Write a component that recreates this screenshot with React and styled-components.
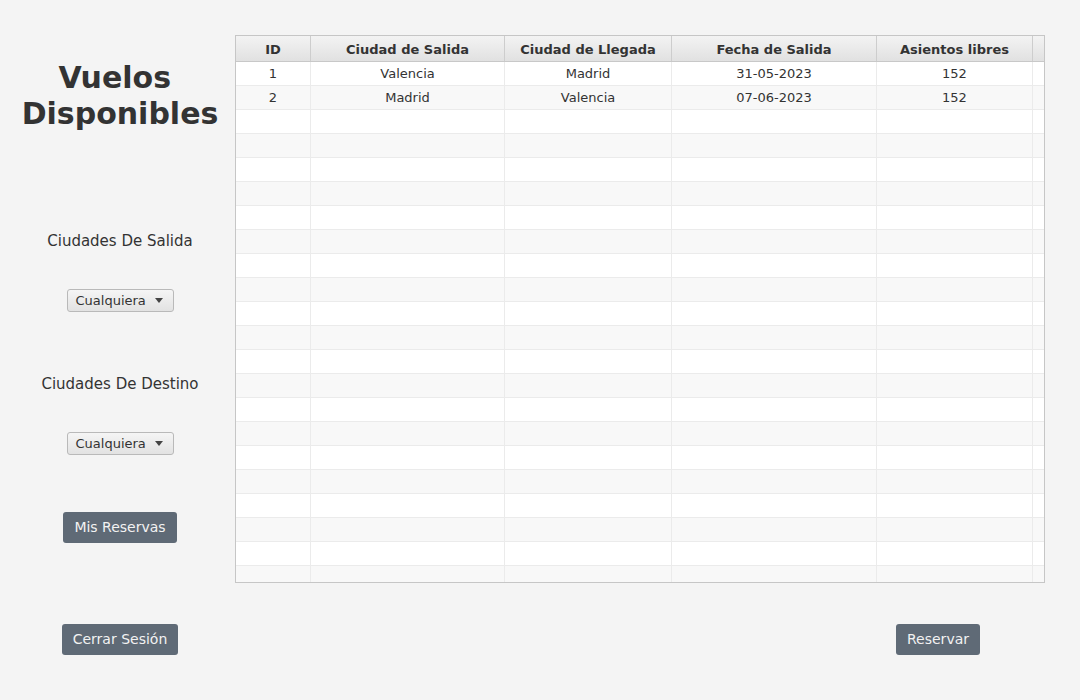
import React from "react";
import styled, { createGlobalStyle } from "styled-components";

const Global = createGlobalStyle`
  html, body { margin: 0; padding: 0; background: #f4f4f4; }
  body { font-family: "DejaVu Sans", "Liberation Sans", sans-serif; color: #333; }
  * { box-sizing: border-box; }
`;

const Page = styled.div`
  display: flex;
  width: 1080px;
  height: 700px;
  background: #f4f4f4;
  overflow: hidden;
`;

const Side = styled.div`
  width: 235px;
  padding-left: 5px;
  display: flex;
  flex-direction: column;
  align-items: center;
  flex-shrink: 0;
`;

const Title = styled.h1`
  margin: 60px 0 0;
  font-size: 30px;
  line-height: 36px;
  font-weight: bold;
  text-align: center;
  color: #333;
  white-space: nowrap;
`;

const Label = styled.div`
  margin-top: ${(p) => p.$top}px;
  font-size: 15px;
  line-height: 17.5px;
  color: #333;
  white-space: nowrap;
`;

const Combo = styled.div`
  margin-top: ${(p) => p.$top}px;
  width: 107px;
  height: 23px;
  display: flex;
  align-items: center;
  justify-content: space-between;
  padding: 0 10px 0 8px;
  border: 1px solid #b9b9b9;
  border-radius: 3px;
  background: linear-gradient(#f5f5f5, #e2e2e2);
  font-size: 13px;
  color: #333;
`;

const Arrow = styled.span`
  width: 0;
  height: 0;
  border-left: 4px solid transparent;
  border-right: 4px solid transparent;
  border-top: 5px solid #444;
`;

const Button = styled.button`
  margin-top: ${(p) => p.$top || 0}px;
  height: 31px;
  padding: 0 11px 2px;
  border: none;
  border-radius: 3px;
  background: #5f6a76;
  color: #f2f2f2;
  font-family: "DejaVu Sans", sans-serif;
  font-size: 14px;
  cursor: pointer;
  white-space: nowrap;
`;

const Main = styled.div`
  display: flex;
  flex-direction: column;
  width: 810px;
`;

const Table = styled.div`
  margin-top: 35px;
  width: 810px;
  height: 548px;
  border: 1px solid #c6c6c6;
  background: #fff;
  overflow: hidden;
`;

const cols = "75px 194px 167px 205px 156px 1fr";

const HeaderRow = styled.div`
  display: grid;
  grid-template-columns: ${cols};
  height: 26px;
  border-bottom: 1px solid #c8c8c8;
  background: linear-gradient(#f3f3f3, #e1e1e1);
`;

const HeadCell = styled.div`
  display: flex;
  align-items: center;
  justify-content: center;
  padding-top: 2px;
  border-right: 1px solid #cdcdcd;
  font-size: 13px;
  font-weight: bold;
  color: #333;
  &:last-child { border-right: none; }
`;

const Row = styled.div`
  display: grid;
  grid-template-columns: ${cols};
  height: 24px;
  border-bottom: 1px solid #ebebeb;
  background: ${(p) => (p.$odd ? "#f8f8f8" : "#fff")};
`;

const Cell = styled.div`
  display: flex;
  align-items: center;
  justify-content: center;
  border-right: 1px solid #ebebeb;
  font-size: 13px;
  color: #333;
  &:last-child { border-right: none; }
`;

const Footer = styled.div`
  display: flex;
  justify-content: flex-end;
  padding-right: 65px;
  margin-top: 41px;
`;

const headers = ["ID", "Ciudad de Salida", "Ciudad de Llegada", "Fecha de Salida", "Asientos libres", ""];
const data = [
  ["1", "Valencia", "Madrid", "31-05-2023", "152", ""],
  ["2", "Madrid", "Valencia", "07-06-2023", "152", ""],
];

export default function App() {
  const rows = Array.from({ length: 22 }, (_, i) => data[i] || ["", "", "", "", "", ""]);
  return (
    <>
      <Global />
      <Page>
        <Side>
          <Title>
            Vuelos&nbsp;
            <br />
            Disponibles
          </Title>
          <Label $top={101}>Ciudades De Salida</Label>
          <Combo $top={38}>
            <span>Cualquiera</span>
            <Arrow />
          </Combo>
          <Label $top={64}>Ciudades De Destino</Label>
          <Combo $top={39}>
            <span>Cualquiera</span>
            <Arrow />
          </Combo>
          <Button $top={57}>Mis Reservas</Button>
          <Button $top={81}>Cerrar Sesión</Button>
        </Side>
        <Main>
          <Table>
            <HeaderRow>
              {headers.map((h, i) => (
                <HeadCell key={i}>{h}</HeadCell>
              ))}
            </HeaderRow>
            {rows.map((r, i) => (
              <Row key={i} $odd={i % 2 === 1}>
                {r.map((c, j) => (
                  <Cell key={j}>{c}</Cell>
                ))}
              </Row>
            ))}
          </Table>
          <Footer>
            <Button>Reservar</Button>
          </Footer>
        </Main>
      </Page>
    </>
  );
}
